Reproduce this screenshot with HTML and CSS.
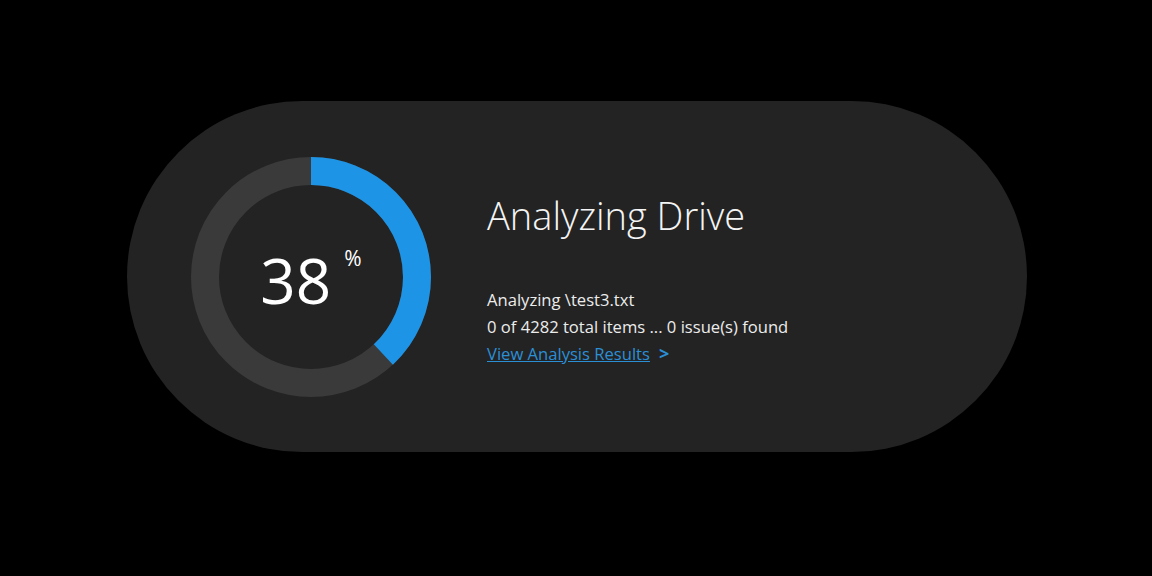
FILE: index.html
```html
<!DOCTYPE html>
<html lang="en">
<head>
<meta charset="utf-8">
<title>Analyzing Drive</title>
<link rel="stylesheet" href="styles.css">
</head>
<body>
<div class="card">
  <div class="ring">
    <svg width="240" height="240" viewBox="0 0 240 240">
      <circle cx="120" cy="120" r="106" fill="none" stroke="#3a3a3a" stroke-width="28"/>
      <circle cx="120" cy="120" r="106" fill="none" stroke="#1e94e6" stroke-width="28"
        stroke-dasharray="253.1 1000" transform="rotate(-90 120 120)"/>
    </svg>
    <div class="value"><span class="num">38</span><span class="pct">%</span></div>
  </div>
  <div class="info">
    <h1 class="title">Analyzing Drive</h1>
    <div class="line">Analyzing \test3.txt</div>
    <div class="line">0 of 4282 total items ... 0 issue(s) found</div>
    <div class="line"><a class="link" href="#">View Analysis Results</a><span class="chev">&gt;</span></div>
  </div>
</div>
</body>
</html>
```

FILE: styles.css
```css
html, body {
  margin: 0;
  padding: 0;
  background: #000;
  width: 1152px;
  height: 576px;
  overflow: hidden;
  font-family: "Open Sans", "Noto Sans", sans-serif;
  color: #f2f2f2;
}
.card {
  margin: 101px 0 0 127px;
  width: 900px;
  height: 351px;
  border-radius: 176px;
  background: #232323;
  display: flex;
  align-items: center;
  box-sizing: border-box;
  padding-left: 64px;
  gap: 56px;
}
.ring {
  position: relative;
  width: 240px;
  height: 240px;
  flex: none;
}
.ring svg {
  display: block;
}
.value {
  position: absolute;
  left: 0;
  top: 0;
  width: 240px;
  height: 240px;
  display: flex;
  align-items: center;
  justify-content: center;
}
.num {
  font-size: 62px;
  font-weight: 400;
  line-height: 1;
  color: #fff;
  margin-top: 6px;
}
.pct {
  font-size: 21px;
  line-height: 1;
  align-self: center;
  margin-top: -36px;
  margin-left: 13px;
  color: #fff;
}
.info {
  align-self: flex-start;
  display: flex;
  flex-direction: column;
  padding-top: 90px;
}
.title {
  margin: 0 0 48px 0;
  font-size: 38px;
  font-weight: 300;
  line-height: 48px;
  color: #f4f4f4;
}
.line {
  font-size: 16.6px;
  line-height: 26.5px;
  color: #ececec;
}
.link {
  color: #2b8fd6;
  text-decoration: underline;
}
.chev {
  color: #2b8fd6;
  font-weight: 700;
  font-size: 18px;
  margin-left: 9px;
}
```
